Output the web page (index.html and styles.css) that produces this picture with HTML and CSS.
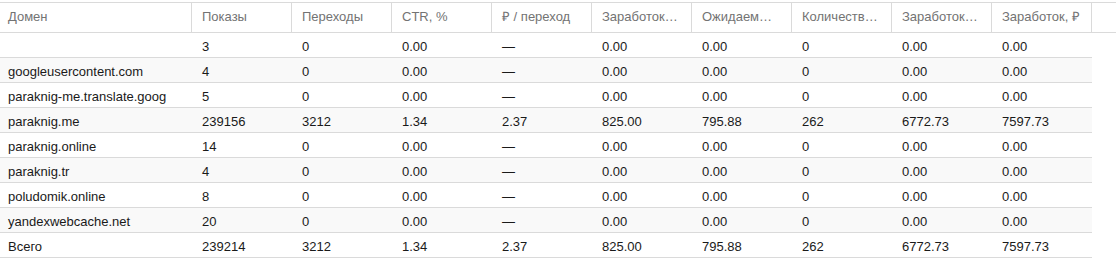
FILE: index.html
```html
<!DOCTYPE html>
<html lang="ru">
<head>
<meta charset="utf-8">
<title>Домены</title>
<link rel="stylesheet" href="styles.css">
</head>
<body>
<div class="report">
  <div class="head">
    <div class="hc">Домен</div>
    <div class="hc">Показы</div>
    <div class="hc">Переходы</div>
    <div class="hc">CTR, %</div>
    <div class="hc">₽ / переход</div>
    <div class="hc" title="Заработок за показы, ₽">Заработок…</div>
    <div class="hc" title="Ожидаемый заработок, ₽">Ожидаем…</div>
    <div class="hc" title="Количество переходов">Количеств…</div>
    <div class="hc" title="Заработок за переходы, ₽">Заработок…</div>
    <div class="hc">Заработок, ₽</div>
    <div class="hc filler"></div>
  </div>
  <div class="rows">
    <div class="row"><div class="c"></div><div class="c">3</div><div class="c">0</div><div class="c">0.00</div><div class="c">—</div><div class="c">0.00</div><div class="c">0.00</div><div class="c">0</div><div class="c">0.00</div><div class="c">0.00</div></div>
    <div class="row"><div class="c">googleusercontent.com</div><div class="c">4</div><div class="c">0</div><div class="c">0.00</div><div class="c">—</div><div class="c">0.00</div><div class="c">0.00</div><div class="c">0</div><div class="c">0.00</div><div class="c">0.00</div></div>
    <div class="row"><div class="c">paraknig-me.translate.goog</div><div class="c">5</div><div class="c">0</div><div class="c">0.00</div><div class="c">—</div><div class="c">0.00</div><div class="c">0.00</div><div class="c">0</div><div class="c">0.00</div><div class="c">0.00</div></div>
    <div class="row"><div class="c">paraknig.me</div><div class="c">239156</div><div class="c">3212</div><div class="c">1.34</div><div class="c">2.37</div><div class="c">825.00</div><div class="c">795.88</div><div class="c">262</div><div class="c">6772.73</div><div class="c">7597.73</div></div>
    <div class="row"><div class="c">paraknig.online</div><div class="c">14</div><div class="c">0</div><div class="c">0.00</div><div class="c">—</div><div class="c">0.00</div><div class="c">0.00</div><div class="c">0</div><div class="c">0.00</div><div class="c">0.00</div></div>
    <div class="row"><div class="c">paraknig.tr</div><div class="c">4</div><div class="c">0</div><div class="c">0.00</div><div class="c">—</div><div class="c">0.00</div><div class="c">0.00</div><div class="c">0</div><div class="c">0.00</div><div class="c">0.00</div></div>
    <div class="row"><div class="c">poludomik.online</div><div class="c">8</div><div class="c">0</div><div class="c">0.00</div><div class="c">—</div><div class="c">0.00</div><div class="c">0.00</div><div class="c">0</div><div class="c">0.00</div><div class="c">0.00</div></div>
    <div class="row"><div class="c">yandexwebcache.net</div><div class="c">20</div><div class="c">0</div><div class="c">0.00</div><div class="c">—</div><div class="c">0.00</div><div class="c">0.00</div><div class="c">0</div><div class="c">0.00</div><div class="c">0.00</div></div>
    <div class="row total"><div class="c">Всего</div><div class="c">239214</div><div class="c">3212</div><div class="c">1.34</div><div class="c">2.37</div><div class="c">825.00</div><div class="c">795.88</div><div class="c">262</div><div class="c">6772.73</div><div class="c">7597.73</div></div>
  </div>
</div>
</body>
</html>
```

FILE: styles.css
```css
html, body {
  margin: 0;
  padding: 0;
  background: #fff;
}

body {
  font-family: "Liberation Sans", Arial, sans-serif;
  font-size: 13px;
  color: #1a1a1a;
}

.report {
  padding-top: 2px;
  width: 1116px;
}

.head {
  display: grid;
  grid-template-columns: 192px repeat(9, 100px) 1fr;
  border-top: 1px solid #dadada;
  border-bottom: 1px solid #dadada;
  height: 31px;
  box-sizing: border-box;
}

.hc {
  box-sizing: border-box;
  border-right: 1px solid #dadada;
  padding: 0 10px 2px 10px;
  line-height: 27px;
  color: #737373;
  white-space: nowrap;
}

.hc:first-child {
  padding-left: 8px;
}

.hc.filler {
  border-right: 0;
}

.rows {
  width: 1092px;
}

.row {
  display: grid;
  grid-template-columns: 192px repeat(9, 100px);
  height: 25px;
  box-sizing: border-box;
  border-bottom: 1px solid #dadada;
}

.row:nth-child(even) {
  background: #f9f9f9;
}

.c {
  padding: 3px 10px 0 10px;
  line-height: 21px;
  white-space: nowrap;
}

.c:first-child {
  padding-left: 8px;
}
```
